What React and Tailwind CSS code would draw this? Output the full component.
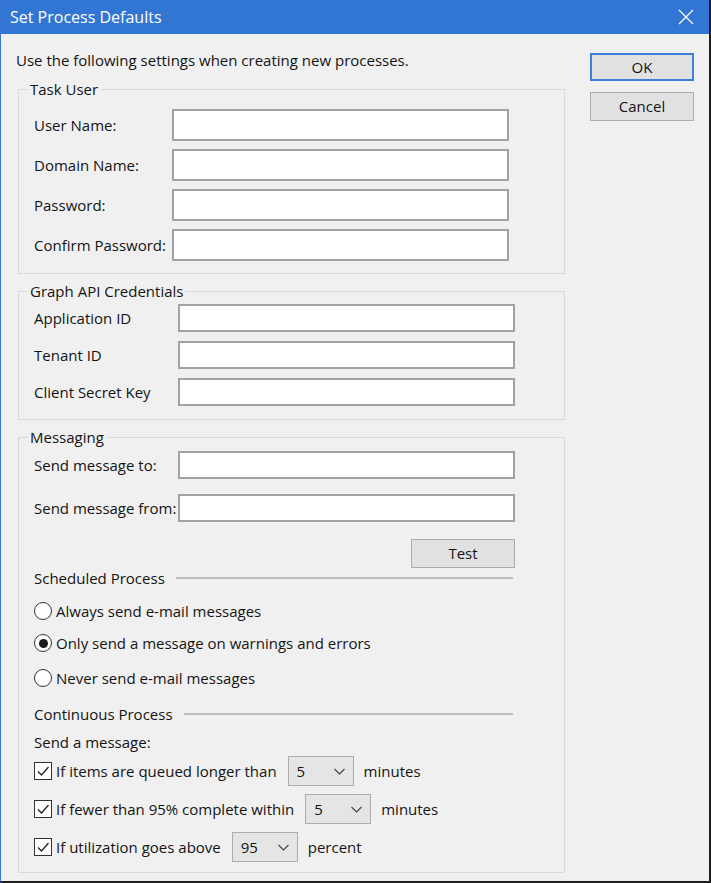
import React from 'react';

const Field = ({ label, labelWidth, height }) => (
  <div className="flex items-center">
    <span className={`${labelWidth} shrink-0`}>{label}</span>
    <input readOnly className={`${height} w-[337px] bg-white border-2 border-[#a2a2a2] outline-none`} />
  </div>
);

const GroupBox = ({ title, className, children }) => (
  <fieldset className={`ml-[2px] w-[547px] border border-[#dadada] ${className}`}>
    <legend className="ml-[9px] px-[2px] leading-[18px]">{title}</legend>
    {children}
  </fieldset>
);

const Radio = ({ checked, label }) => (
  <div className="flex items-center leading-[18px]">
    <span className="w-[18px] h-[18px] rounded-full border border-[#333] bg-white flex items-center justify-center shrink-0">
      {checked && <span className="w-[9px] h-[9px] rounded-full bg-[#1a1a1a]" />}
    </span>
    <span className="ml-[4px]">{label}</span>
  </div>
);

const Combo = ({ value }) => (
  <div className="w-[66px] h-[30px] border border-[#adadad] bg-[#e5e5e5] flex items-center justify-between pl-[8px] pr-[8px] shrink-0">
    <span>{value}</span>
    <svg width="11" height="7" viewBox="0 0 11 7">
      <path d="M0.5 1 L5.5 6 L10.5 1" fill="none" stroke="#444" strokeWidth="1.1" />
    </svg>
  </div>
);

const CheckRow = ({ label, value, unit }) => (
  <div className="flex items-center h-[30px]">
    <span className="w-[18px] h-[18px] border border-[#333] bg-white flex items-center justify-center shrink-0">
      <svg width="14" height="14" viewBox="0 0 14 14">
        <path d="M2 7.5 L5.5 11 L12.5 3" fill="none" stroke="#222" strokeWidth="1.3" />
      </svg>
    </span>
    <span className="ml-[4px]">{label}</span>
    <span className="ml-[11px]"><Combo value={value} /></span>
    <span className="ml-[10px]">{unit}</span>
  </div>
);

const SectionLine = ({ title, className }) => (
  <div className={`flex items-center leading-[18px] pr-[2px] ${className}`}>
    <span>{title}</span>
    <span className="flex-1 ml-[11px] h-[2px] bg-[#bdbdbd]" />
  </div>
);

export default function App() {
  return (
    <div className="w-[711px] h-[883px] flex flex-col bg-[#f0f0f0] border-l border-l-[#3a78d4] border-r-2 border-r-[#1e1e1e] border-b-2 border-b-[#1e1e1e] font-['Open_Sans',sans-serif] text-[15px] text-[#141414] overflow-hidden">
      {/* Title bar */}
      <div className="h-[34px] shrink-0 bg-[#3276d4] flex items-center justify-between pl-[9px] pr-[15px] text-white text-[16px]">
        <span>Set Process Defaults</span>
        <svg width="16" height="16" viewBox="0 0 16 16">
          <path d="M1 1 L15 15 M15 1 L1 15" stroke="#fff" strokeWidth="1.2" />
        </svg>
      </div>

      <div className="flex">
        {/* Left column */}
        <div className="w-[564px] pl-[15px] pt-[17px]">
          <p className="leading-[18px]">Use the following settings when creating new processes.</p>

          <GroupBox title="Task User" className="mt-[11px]">
            <div className="pl-[15px] pt-[11px] pb-[12px] flex flex-col gap-[8px]">
              <Field label="User Name:" labelWidth="w-[138px]" height="h-[32px]" />
              <Field label="Domain Name:" labelWidth="w-[138px]" height="h-[32px]" />
              <Field label="Password:" labelWidth="w-[138px]" height="h-[32px]" />
              <Field label="Confirm Password:" labelWidth="w-[138px]" height="h-[32px]" />
            </div>
          </GroupBox>

          <GroupBox title="Graph API Credentials" className="mt-[8px]">
            <div className="pl-[15px] pt-[4px] pb-[13px] flex flex-col gap-[9px]">
              <Field label="Application ID" labelWidth="w-[144px]" height="h-[28px]" />
              <Field label="Tenant ID" labelWidth="w-[144px]" height="h-[28px]" />
              <Field label="Client Secret Key" labelWidth="w-[144px]" height="h-[28px]" />
            </div>
          </GroupBox>

          <GroupBox title="Messaging" className="mt-[8px]">
            <div className="pl-[15px] pr-[49px] pt-[5px] pb-[10px] flex flex-col">
              <div className="flex flex-col gap-[15px]">
                <Field label="Send message to:" labelWidth="w-[144px]" height="h-[28px]" />
                <Field label="Send message from:" labelWidth="w-[144px]" height="h-[28px]" />
              </div>
              <div className="flex justify-end mt-[17px]">
                <button className="w-[104px] h-[29px] bg-[#e1e1e1] border border-[#adadad]">Test</button>
              </div>
              <SectionLine title="Scheduled Process" className="mt-[1px]" />
              <div className="mt-[15px] flex flex-col">
                <Radio label="Always send e-mail messages" />
                <div className="mt-[14px]"><Radio checked label="Only send a message on warnings and errors" /></div>
                <div className="mt-[17px]"><Radio label="Never send e-mail messages" /></div>
              </div>
              <SectionLine title="Continuous Process" className="mt-[18px]" />
              <p className="mt-[10px] leading-[18px]">Send a message:</p>
              <div className="mt-[5px] flex flex-col gap-[8px]">
                <CheckRow label="If items are queued longer than" value="5" unit="minutes" />
                <CheckRow label="If fewer than 95% complete within" value="5" unit="minutes" />
                <CheckRow label="If utilization goes above" value="95" unit="percent" />
              </div>
            </div>
          </GroupBox>
        </div>

        {/* Right column: buttons */}
        <div className="ml-[25px] pt-[19px] flex flex-col gap-[11px]">
          <button className="w-[104px] h-[28px] bg-[#e1e1e1] border-2 border-[#3c80d8]">OK</button>
          <button className="w-[104px] h-[29px] bg-[#e1e1e1] border border-[#adadad]">Cancel</button>
        </div>
      </div>
    </div>
  );
}
